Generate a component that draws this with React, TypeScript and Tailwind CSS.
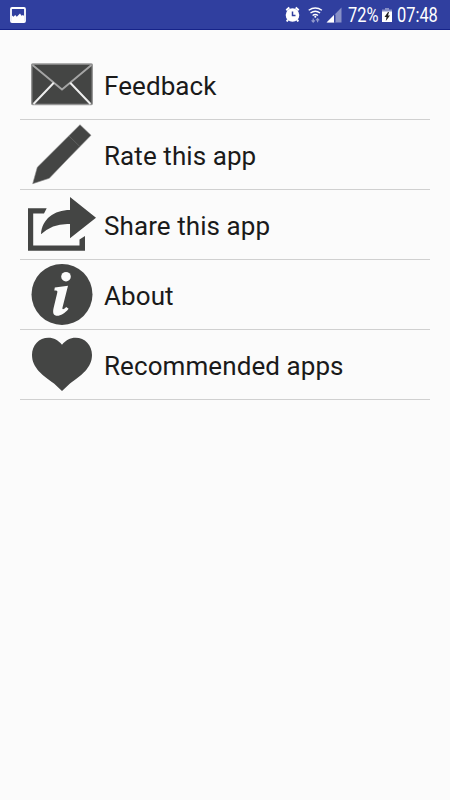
import type { ReactNode } from 'react';

function Row({ label, children }: { label: string; children: ReactNode }) {
  return (
    <li className="flex h-[70px] items-center border-b border-[#d0d0d0]">
      <svg viewBox="0 0 80 69" className="h-[69px] w-20 shrink-0" fill="#444544" aria-hidden="true">
        {children}
      </svg>
      <span className="ml-1 whitespace-nowrap pt-[3px] text-[26px] leading-8 tracking-[0.08px]">{label}</span>
    </li>
  );
}

export default function App() {
  return (
    <div className="flex h-[800px] w-[450px] flex-col overflow-hidden bg-[#fbfbfb] font-['Roboto',sans-serif] text-[#1a1a1a]">
      <header className="flex h-[30px] items-center border-b border-[#162389] bg-[#303f9f] text-white">
        <svg viewBox="0 0 16 16" className="ml-[10px] mt-px h-4 w-4" aria-hidden="true">
          <rect x="1" y="1" width="14" height="14" rx="1" fill="none" stroke="white" strokeWidth="1.8" />
          <path d="M2 8.5l1.5 1.3L5.2 8l1.6 1.8L10 6.5l1.5 2.3L13 8l1 1v6H2z" fill="white" />
        </svg>
        <svg viewBox="0 0 60 20" className="ml-[258px] h-5 w-[60px]" aria-hidden="true">
          <path d="M2.3 5.2l3-2.7M14.7 5.2l-3-2.7M4 14.5l-1.2 2M13 14.5l1.2 2" stroke="white" strokeWidth="2" />
          <circle cx="8.5" cy="10" r="6.8" fill="white" />
          <path d="M8.5 6.5v4h3" stroke="#303f9f" strokeWidth="1.5" fill="none" />
          <path d="M24.7 5.3q6.6-4.6 13.2 0M26.5 8q4.8-3.4 9.6 0M28.6 10.5q2.7-2 5.4 0" stroke="white" strokeWidth="1.4" fill="none" />
          <circle cx="31.3" cy="11.8" r="1" fill="white" />
          <path d="M29.2 13.5v3.5M27.6 15.3l1.6 1.7 1.6-1.7M33.6 17.2v-3.5M32 15.4l1.6-1.7 1.6 1.7" stroke="#939bcd" strokeWidth="1.2" fill="none" />
          <path d="M43 17.5L57.5 2.5v15z" fill="#8790c7" />
          <path d="M50 17.5V9.5h1.5v8z" fill="#303f9f" />
          <path d="M42.5 17.5L50 10v7.5z" fill="white" />
        </svg>
        <span className="ml-1 w-[30px] whitespace-nowrap text-[20px] leading-5"><span className="inline-block origin-left scale-x-[0.82]">72%</span></span>
        <svg viewBox="0 0 10 16" className="ml-1 h-4 w-[10px]" aria-hidden="true">
          <path d="M3 1h4v1.5h3V5H0V2.5h3z" fill="#8790c7" />
          <path d="M0 4.5h10V15H0z" fill="white" />
          <path d="M6 5L2.5 10h2L3.8 14L8 8.5H6L7 5z" fill="#222" />
        </svg>
        <span className="ml-[5px] whitespace-nowrap text-[20px] leading-5"><span className="inline-block origin-left scale-x-[0.82]">07:48</span></span>
      </header>
      <ul className="mx-5 mt-5">
        <Row label="Feedback">
          <rect x="11.7" y="14" width="60.6" height="40.5" rx="1" stroke="#969696" strokeWidth="1.4" />
          <path d="M12.5 15L42 39.5L71.5 15" fill="none" stroke="#a5a5a5" strokeWidth="1.9" />
          <path d="M13.5 54L33.8 32.7M70.5 54L50.2 32.7" stroke="#eeeeee" strokeWidth="2" />
        </Row>
        <Row label="Rate this app">
          <path d="M60 4.7L71 15.3L48.5 38.3L29.3 58.3L12.7 63.7L17.3 47.3z" stroke="#8b8b8b" strokeWidth="0.6" />
          <path d="M49 16L60 26.7" stroke="#626362" strokeWidth="0.9" />
        </Row>
        <Row label="Share this app">
          <path d="M8 18.3H26.7L24 23.5H13.2V55.5H59.5V49.5L65 46V60.7H8z" />
          <path d="M50 7L76 27.7L50 48.3V34Q33 33 21 44.3C22 29 34 20 50 20z" />
        </Row>
        <Row label="About">
          <circle cx="42" cy="34.4" r="30.5" />
          <circle cx="46" cy="16.7" r="4.8" fill="#fbfbfb" />
          <path d="M34.8 27.4L48 25.8L42.5 47.5C42 49.8 43.3 50 46.2 47L48.6 48.8C44.5 54.2 39.5 56.3 36.2 55.7C32.8 55 32.8 51.5 33.6 48L37.2 33C37.7 30.8 37.3 30.4 34.3 30.4z" fill="#fbfbfb" />
        </Row>
        <Row label="Recommended apps">
          <path d="M42 14.8C38 9.8 34 7.7 28.5 7.7C19 7.7 12 15 12 25C12 38 23 45.5 34 53.5L42 61L50 53.5C61 45.5 72 38 72 25C72 15 65 7.7 55.5 7.7C50 7.7 46 9.8 42 14.8z" />
        </Row>
      </ul>
    </div>
  );
}
